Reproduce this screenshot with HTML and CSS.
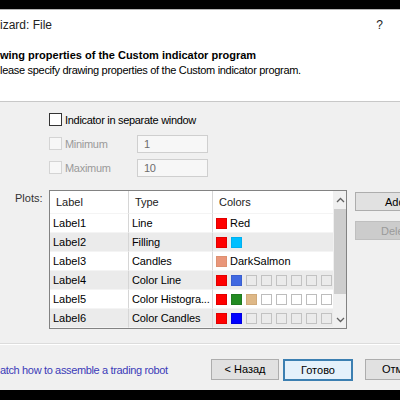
FILE: index.html
```html
<!DOCTYPE html>
<html>
<head>
<meta charset="utf-8">
<link rel="stylesheet" href="styles.css">
</head>
<body>
<div class="topbar"></div>
<div class="header">
  <div class="titlerow"><span class="title">izard: File</span><span class="help">?</span></div>
  <div class="heading">wing properties of the Custom indicator program</div>
  <div class="subtitle">lease specify drawing properties of the Custom indicator program.</div>
</div>
<div class="main">
  <div class="opt first"><span class="cb"></span><span>Indicator in separate window</span></div>
  <div class="opt dis"><span class="cb"></span><span class="optlabel">Minimum</span><span class="input">1</span></div>
  <div class="opt dis"><span class="cb"></span><span class="optlabel">Maximum</span><span class="input">10</span></div>
  <div class="plots">
    <div class="plotslabel">Plots:</div>
    <div class="table">
      <div class="cols">
        <div class="row head"><div class="c1">Label</div><div class="c2">Type</div><div class="c3">Colors</div></div>
        <div class="row"><div class="c1">Label1</div><div class="c2">Line</div><div class="c3"><i class="sw red"></i><span>Red</span></div></div>
        <div class="row alt"><div class="c1">Label2</div><div class="c2">Filling</div><div class="c3"><i class="sw red"></i><i class="sw sky"></i></div></div>
        <div class="row"><div class="c1">Label3</div><div class="c2">Candles</div><div class="c3"><i class="sw salmon"></i><span>DarkSalmon</span></div></div>
        <div class="row alt"><div class="c1">Label4</div><div class="c2">Color Line</div><div class="c3"><i class="sw red"></i><i class="sw royal"></i><i class="sw e"></i><i class="sw e"></i><i class="sw e"></i><i class="sw e"></i><i class="sw e"></i><i class="sw e"></i></div></div>
        <div class="row"><div class="c1">Label5</div><div class="c2">Color Histogra...</div><div class="c3"><i class="sw red"></i><i class="sw green"></i><i class="sw tan"></i><i class="sw w"></i><i class="sw w"></i><i class="sw w"></i><i class="sw w"></i><i class="sw w"></i></div></div>
        <div class="row alt"><div class="c1">Label6</div><div class="c2">Color Candles</div><div class="c3"><i class="sw red"></i><i class="sw blue"></i><i class="sw e"></i><i class="sw e"></i><i class="sw e"></i><i class="sw e"></i><i class="sw e"></i><i class="sw e"></i></div></div>
      </div>
      <div class="scroll">
        <div class="arrow">
          <svg width="9" height="6" viewBox="0 0 9 6"><path d="M1 5 L4.5 1.5 L8 5" fill="none" stroke="#606060" stroke-width="1.3"/></svg>
        </div>
        <div class="track"><div class="thumb"></div></div>
        <div class="arrow">
          <svg width="9" height="6" viewBox="0 0 9 6"><path d="M1 1 L4.5 4.5 L8 1" fill="none" stroke="#606060" stroke-width="1.3"/></svg>
        </div>
      </div>
    </div>
    <div class="side">
      <div class="btn">Add</div>
      <div class="btn disabled">Dele</div>
    </div>
  </div>
</div>
<div class="footer">
  <a class="link">atch how to assemble a trading robot</a>
  <div class="btns">
    <div class="btn">&lt; Назад</div>
    <div class="btn focus">Готово</div>
    <div class="btn cancel">Отм</div>
  </div>
</div>
<div class="bottombar"></div>
</body>
</html>
```
FILE: styles.css
```css
html, body {
  margin: 0;
  padding: 0;
}
body {
  width: 400px;
  height: 400px;
  overflow: hidden;
  background: #f0f0f0;
  font-family: "Liberation Sans", Arial, sans-serif;
  font-size: 11px;
  color: #000;
  display: flex;
  flex-direction: column;
}
.topbar {
  height: 9px;
  background: #000;
  border-bottom: 1px solid #b4b4b4;
  flex: none;
}
.header {
  background: #fff;
  height: 92px;
  border-bottom: 1px solid #c8c8c8;
  flex: none;
  box-sizing: border-box;
  padding-top: 7px;
}
.titlerow {
  display: flex;
  justify-content: space-between;
  height: 16px;
  line-height: 16px;
  font-size: 12px;
  padding-right: 17px;
  color: #222;
}
.heading {
  margin-top: 14px;
  font-weight: bold;
  font-size: 11px;
  line-height: 16px;
}
.subtitle {
  line-height: 15px;
  font-size: 11px;
  letter-spacing: -0.3px;
}
.main {
  flex: none;
  height: 242px;
  padding-top: 11px;
  box-sizing: border-box;
  border-bottom: 1px solid #dcdcdc;
}
.opt {
  display: flex;
  align-items: center;
  height: 13px;
  margin-left: 49px;
  margin-bottom: 11px;
  font-size: 11px;
  letter-spacing: -0.3px;
}
.opt.dis {
  color: #9a9a9a;
}
.cb {
  width: 11px;
  height: 11px;
  border: 1px solid #333;
  background: #fff;
  margin-right: 3px;
  flex: none;
}
.opt.dis .cb {
  border-color: #d4d4d4;
  background: #f7f7f7;
}
.optlabel {
  width: 72px;
}
.input {
  width: 63px;
  height: 16px;
  line-height: 16px;
  border: 1px solid #cfcfcf;
  background: #f7f7f7;
  padding-left: 6px;
  color: #6d6d6d;
}
.plots {
  display: flex;
  align-items: flex-start;
  padding-top: 5px;
}
.plotslabel {
  width: 49px;
  flex: none;
  padding-left: 15px;
  box-sizing: border-box;
  margin-top: 2px;
  color: #333;
}
.table {
  display: flex;
  flex: none;
  width: 298px;
  height: 139px;
  border: 1px solid #828282;
  box-sizing: border-box;
  background: #fff;
  overflow: hidden;
}
.cols {
  width: 283px;
  overflow: hidden;
  flex: none;
}
.row {
  display: flex;
  height: 19px;
  align-items: center;
  white-space: nowrap;
}
.row.head {
  height: 23px;
}
.row.alt {
  background: #ebebeb;
}
.row > div {
  height: 100%;
  display: flex;
  align-items: center;
  box-sizing: border-box;
  padding-left: 3px;
  border-bottom: 1px solid #f4f4f4;
}
.row .c1 {
  width: 79px;
  border-right: 1px solid #d6d6d6;
}
.row .c2 {
  width: 84px;
  border-right: 1px solid #d6d6d6;
  letter-spacing: -0.1px;
}
.row .c3 {
  width: 120px;
  overflow: hidden;
  gap: 4px;
}
.row.head > div {
  padding-left: 6px;
  color: #222;
}
.sw {
  width: 11px;
  height: 11px;
  flex: none;
  border: 1px solid #c4c4c4;
  box-sizing: border-box;
  display: block;
}
.sw + span {
  margin-left: -1px;
}
.sw.red { background: #ff0000; border-color: #e00000; }
.sw.sky { background: #00bfff; border-color: #00b0f0; }
.sw.salmon { background: #e9967a; border-color: #dd9070; }
.sw.royal { background: #4169e1; border-color: #3a5fd0; }
.sw.green { background: #228b22; border-color: #207a20; }
.sw.tan { background: #deb887; border-color: #d0aa7a; }
.sw.blue { background: #0000ff; border-color: #0000e0; }
.sw.e { background: #ebebeb; border-color: #c2c2c2; }
.sw.w { background: #fff; border-color: #bdbdbd; }
.scroll {
  width: 15px;
  flex: none;
  display: flex;
  flex-direction: column;
  background: #f0f0f0;
}
.arrow {
  height: 17px;
  display: flex;
  align-items: center;
  justify-content: center;
  flex: none;
}
.track {
  flex: 1;
}
.thumb {
  margin: 1px 1px 0;
  height: 85px;
  background: #cdcdcd;
}
.side {
  flex: none;
  margin-left: 8px;
  display: flex;
  flex-direction: column;
  gap: 10px;
  margin-top: 2px;
}
.btn {
  height: 19px;
  line-height: 19px;
  width: 66px;
  border: 1px solid #adadad;
  background: #e1e1e1;
  text-align: center;
  font-size: 11px;
}
.side .btn {
  text-align: left;
  padding-left: 29px;
  box-sizing: border-box;
  width: 45px;
  border-right: none;
}
.btn.disabled {
  background: #cccccc;
  border-color: #bfbfbf;
  color: #9a9a9a;
  padding-left: 25px;
}
.footer {
  flex: none;
  height: 45px;
  display: flex;
  align-items: center;
  justify-content: space-between;
  border-top: 1px solid #ffffff;
}
.link {
  color: #3b3bb8;
  font-size: 11px;
  margin-top: 4px;
  letter-spacing: -0.35px;
}
.btns {
  display: flex;
  gap: 4px;
  margin-top: 4px;
  margin-right: -11px;
}
.btn.focus {
  border: 2px solid #3c7fb1;
  background: #e5f1fb;
  height: 18px;
  line-height: 18px;
}
.btn.cancel {
  margin-left: 8px;
  width: 29px;
  border-right: none;
  text-align: left;
  padding-left: 16px;
}
.bottombar {
  flex: 1;
  background: #000;
}
```
